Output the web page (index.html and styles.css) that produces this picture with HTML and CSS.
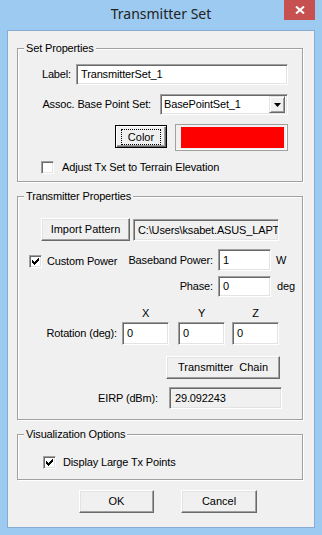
FILE: index.html
```html
<!DOCTYPE html>
<html>
<head>
<meta charset="utf-8">
<title>Transmitter Set</title>
<link rel="stylesheet" href="styles.css">
</head>
<body>
<div class="window">
  <header class="titlebar">
    <span></span>
    <h1 class="title">Transmitter Set</h1>
    <button class="close" aria-label="Close">
      <svg width="10" height="8" viewBox="0 0 10 8"><path d="M1 0.5 L9 7.5 M9 0.5 L1 7.5" stroke="#fff" stroke-width="2"/></svg>
    </button>
  </header>
  <main class="client">
    <section class="group g-set">
      <span class="group-title">Set Properties</span>
      <div class="row r-label"><span>Label:</span><span class="edit e-label">TransmitterSet_1</span></div>
      <div class="row r-assoc"><span>Assoc. Base Point Set:</span>
        <span class="edit combo"><span class="combo-text">BasePointSet_1</span>
          <span class="combo-btn"><svg width="7" height="4" viewBox="0 0 7 4"><path d="M0 0H7L3.5 4Z" fill="#000"/></svg></span>
        </span>
      </div>
      <div class="row r-color">
        <button class="btn btn-default btn-color"><span class="focus">Color</span></button>
        <span class="swatch"><span class="swatch-fill"></span></span>
      </div>
      <div class="check-row r-adjust"><span class="cb"></span><span>Adjust Tx Set to Terrain Elevation</span></div>
    </section>

    <section class="group g-tx">
      <span class="group-title">Transmitter Properties</span>
      <div class="row r-import">
        <button class="btn btn-import">Import Pattern</button>
        <span class="edit readonly e-path">C:\Users\ksabet.ASUS_LAPT</span>
      </div>
      <div class="power">
        <div class="pcell">
          <div class="check-row cp"><span class="cb checked"><svg width="7" height="7" viewBox="0 0 7 7"><path d="M0 2h1v3H0zM1 3h1v3H1zM2 4h1v3H2zM3 3h1v3H3zM4 2h1v3H4zM5 1h1v3H5zM6 0h1v3H6z" fill="#000"/></svg></span><span>Custom Power</span></div>
          <span class="plabel">Baseband Power:</span>
        </div>
        <span class="edit e-num">1</span>
        <span class="unit">W</span>
        <div class="pcell"><span></span><span class="plabel">Phase:</span></div>
        <span class="edit e-num">0</span>
        <span class="unit unit-deg">deg</span>
      </div>
      <div class="rotation">
        <span></span><span class="axis">X</span><span class="axis">Y</span><span class="axis">Z</span>
        <span class="rlabel">Rotation (deg):</span>
        <span class="edit e-rot">0</span>
        <span class="edit e-rot">0</span>
        <span class="edit e-rot">0</span>
      </div>
      <div class="row r-chain"><button class="btn btn-chain">Transmitter&nbsp; Chain</button></div>
      <div class="row r-eirp"><span class="elabel">EIRP (dBm):</span><span class="edit readonly e-eirp">29.092243</span></div>
    </section>

    <section class="group g-vis">
      <span class="group-title">Visualization Options</span>
      <div class="check-row r-large"><span class="cb checked"><svg width="7" height="7" viewBox="0 0 7 7"><path d="M0 2h1v3H0zM1 3h1v3H1zM2 4h1v3H2zM3 3h1v3H3zM4 2h1v3H4zM5 1h1v3H5zM6 0h1v3H6z" fill="#000"/></svg></span><span>Display Large Tx Points</span></div>
    </section>

    <div class="actions">
      <button class="btn btn-ok">OK</button>
      <button class="btn btn-cancel">Cancel</button>
    </div>
  </main>
</div>
</body>
</html>
```

FILE: styles.css
```css
* { box-sizing: border-box; }
html, body { margin: 0; padding: 0; }
body {
  background: #9dcaf0;
  font: 11px/13px "Liberation Sans", Arial, sans-serif;
  letter-spacing: -0.15px;
  color: #000;
}
.window {
  width: 322px;
  height: 535px;
  display: flex;
  flex-direction: column;
}
.titlebar {
  height: 30px;
  flex: none;
  display: grid;
  grid-template-columns: 1fr auto 1fr;
  align-items: start;
}
.title {
  margin: 5px 0 0;
  font: 400 14px/18px "Noto Sans", sans-serif;
  letter-spacing: 0;
  color: #222;
}
.close {
  justify-self: end;
  margin-right: 7px;
  width: 31px;
  height: 20px;
  border: 0;
  padding: 0;
  background: #c75050;
  display: flex;
  align-items: center;
  justify-content: center;
}
.client {
  flex: 1;
  margin: 0 7px 7px;
  border: 1px solid #86acd3;
  background: #f0f0f0;
  padding: 0 11px 0 9px;
  display: flex;
  flex-direction: column;
}

/* group boxes */
.group {
  position: relative;
  border: 1px solid #a0a0a0;
  box-shadow: 1px 1px 0 #fff, inset 1px 1px 0 #fff;
}
.group-title {
  position: absolute;
  left: 6px;
  top: -7px;
  padding: 0 2px;
  background: #f0f0f0;
  line-height: 13px;
}
.g-set { margin-top: 17px; padding-bottom: 7px; }
.g-tx { margin-top: 14px; padding-bottom: 10px; }
.g-vis { margin-top: 14px; padding-bottom: 10px; }

.row { display: flex; align-items: center; }

/* edit fields */
.edit {
  display: flex;
  align-items: center;
  background: #fff;
  border: 1px solid;
  border-color: #a0a0a0 #fff #fff #a0a0a0;
  box-shadow: inset 1px 1px 0 #696969, inset -1px -1px 0 #e3e3e3;
  padding: 0 4px;
  white-space: nowrap;
  overflow: hidden;
}
.edit.readonly { background: #f0f0f0; }

/* buttons */
.btn {
  font: inherit;
  color: #000;
  background: #f0f0f0;
  border: 1px solid;
  border-color: #fff #696969 #696969 #fff;
  box-shadow: inset -1px -1px 0 #a0a0a0, inset 1px 1px 0 #e3e3e3;
  padding: 0;
  height: 23px;
  display: flex;
  align-items: center;
  justify-content: center;
  white-space: nowrap;
}
.btn-default {
  border: 1px solid #000;
  box-shadow: inset 1px 1px 0 #fff, inset -1px -1px 0 #696969, inset -2px -2px 0 #a0a0a0;
}
.focus {
  border: 1px dotted #000;
  padding: 1px 6px 1px 6px;
  line-height: 12px;
}

/* checkboxes */
.check-row { display: flex; align-items: center; white-space: nowrap; }
.cb {
  width: 13px;
  height: 13px;
  flex: none;
  background: #fff;
  border: 1px solid;
  border-color: #a0a0a0 #fff #fff #a0a0a0;
  box-shadow: inset 1px 1px 0 #696969, inset -1px -1px 0 #e3e3e3;
  display: flex;
  align-items: center;
  justify-content: center;
}
.cb svg { display: block; }

/* Set Properties */
.r-label { justify-content: flex-end; gap: 5px; padding-right: 14px; margin-top: 15px; height: 21px; }
.e-label { width: 212px; height: 21px; }
.r-assoc { justify-content: flex-end; gap: 9px; padding-right: 14px; margin-top: 9px; height: 21px; }
.combo { width: 128px; height: 21px; padding: 0 2px 0 3px; justify-content: space-between; }
.combo-btn {
  width: 16px;
  height: 17px;
  background: #f0f0f0;
  border: 1px solid;
  border-color: #e3e3e3 #696969 #696969 #e3e3e3;
  box-shadow: inset 1px 1px 0 #fff, inset -1px -1px 0 #a0a0a0;
  display: flex;
  align-items: center;
  justify-content: center;
}
.combo-btn svg { display: block; }
.r-color { justify-content: flex-end; align-items: flex-start; gap: 8px; padding-right: 14px; margin-top: 9px; height: 27px; }
.btn-color { width: 52px; height: 23px; margin-top: 1px; }
.swatch {
  width: 113px;
  height: 27px;
  border: 1px solid #a0a0a0;
  box-shadow: inset -1px -1px 0 #fff;
  background: #f0f0f0;
  padding: 2px 3px 2px 5px;
  display: flex;
}
.swatch-fill { flex: 1; background: #ff0000; }
.r-adjust { padding-left: 23px; gap: 8px; margin-top: 10px; }

/* Transmitter Properties */
.r-import { padding-left: 23px; gap: 3px; margin-top: 21px; align-items: flex-start; }
.btn-import { width: 89px; }
.e-path { width: 146px; height: 22px; margin-top: 1px; padding-left: 4px; }
.power {
  display: grid;
  grid-template-columns: 1fr 53px 26px;
  grid-template-rows: 22px 21px;
  column-gap: 5px;
  row-gap: 5px;
  align-items: center;
  padding-left: 11px;
  margin-top: 8px;
}
.pcell { display: flex; justify-content: space-between; align-items: center; white-space: nowrap; }
.cp { gap: 5px; margin-top: 2px; }
.e-num { height: 100%; }
.unit-deg { margin-left: 1px; }
.rotation {
  display: grid;
  grid-template-columns: 104px 56px 54px 47px;
  grid-template-rows: 13px 23px;
  row-gap: 2px;
  align-items: center;
  margin-top: 10px;
}
.axis { width: 47px; text-align: center; }
.rlabel { text-align: right; padding-right: 5px; white-space: nowrap; }
.e-rot { width: 47px; height: 23px; align-items: flex-start; padding-top: 4px; }
.r-chain { padding-left: 148px; margin-top: 11px; }
.btn-chain { width: 114px; }
.r-eirp { margin-top: 8px; gap: 11px; }
.elabel { width: 140px; text-align: right; }
.e-eirp { width: 113px; height: 22px; padding-left: 5px; }

/* Visualization */
.r-large { padding-left: 25px; gap: 7px; margin-top: 21px; }

/* bottom buttons */
.actions { display: flex; gap: 27px; padding-left: 62px; margin-top: 10px; }
.btn-ok { width: 75px; }
.btn-cancel { width: 76px; }
```
